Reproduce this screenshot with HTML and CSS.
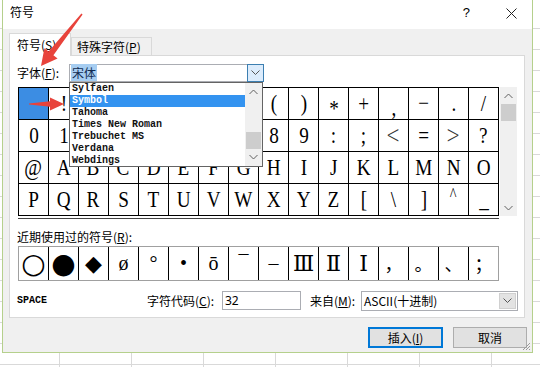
FILE: index.html
```html
<!DOCTYPE html>
<html lang="zh-CN">
<head>
    <meta charset="UTF-8">
    <title>符号</title>
    <link rel="stylesheet" href="styles.css">
</head>
<body>
<div class="desk">
    <div class="dialog">
        <div class="titlebar">
            <span class="title">符号</span>
            <span class="help">?</span>
            <svg class="close" width="11" height="11" viewBox="0 0 11 11"><path d="M0.5 0.5 L10.5 10.5 M10.5 0.5 L0.5 10.5" stroke="#222" stroke-width="1" fill="none"/></svg>
        </div>

        <div class="content">
            <div class="tabs">
                <div class="tab active">符号(<u>S</u>)</div>
                <div class="tab">特殊字符(<u>P</u>)</div>
            </div>

            <div class="panel">
                <div class="font-row">
                    <label class="font-label">字体(<u>F</u>):</label>
                    <div class="combo font-combo">
                        <span class="combo-text"><span class="hl">宋体</span></span>
                        <span class="combo-btn active-btn">
                            <svg width="9" height="6" viewBox="0 0 9 6"><path d="M0.5 0.5 L4.5 4.5 L8.5 0.5" stroke="#555" fill="none"/></svg>
                        </span>
                    </div>

                    <div class="font-list">
                        <ul class="font-items">
                            <li>Sylfaen</li>
                            <li class="picked">Symbol</li>
                            <li>Tahoma</li>
                            <li>Times New Roman</li>
                            <li>Trebuchet MS</li>
                            <li>Verdana</li>
                            <li>Webdings</li>
                        </ul>
                        <div class="scrollbar list-scroll">
                            <span class="sb-btn"><svg width="9" height="6" viewBox="0 0 9 6"><path d="M0.5 5 L4.5 1 L8.5 5" stroke="#606060" fill="none"/></svg></span>
                            <span class="sb-track"></span>
                            <span class="sb-thumb"></span>
                            <span class="sb-btn"><svg width="9" height="6" viewBox="0 0 9 6"><path d="M0.5 1 L4.5 5 L8.5 1" stroke="#606060" fill="none"/></svg></span>
                        </div>
                    </div>
                </div>

                <div class="symbols">
                    <div class="grid-wrap">
                        <div class="grid">
                            <div class="cell sel"><span></span></div>
                            <div class="cell"><span>!</span></div>
                            <div class="cell"><span>"</span></div>
                            <div class="cell"><span>#</span></div>
                            <div class="cell"><span>$</span></div>
                            <div class="cell"><span>%</span></div>
                            <div class="cell"><span>&amp;</span></div>
                            <div class="cell"><span>'</span></div>
                            <div class="cell"><span>(</span></div>
                            <div class="cell"><span>)</span></div>
                            <div class="cell"><span class="mid">*</span></div>
                            <div class="cell"><span>+</span></div>
                            <div class="cell"><span class="low">,</span></div>
                            <div class="cell"><span>−</span></div>
                            <div class="cell"><span>.</span></div>
                            <div class="cell"><span>/</span></div>

                            <div class="cell"><span>0</span></div>
                            <div class="cell"><span>1</span></div>
                            <div class="cell"><span>2</span></div>
                            <div class="cell"><span>3</span></div>
                            <div class="cell"><span>4</span></div>
                            <div class="cell"><span>5</span></div>
                            <div class="cell"><span>6</span></div>
                            <div class="cell"><span>7</span></div>
                            <div class="cell"><span>8</span></div>
                            <div class="cell"><span>9</span></div>
                            <div class="cell"><span>:</span></div>
                            <div class="cell"><span>;</span></div>
                            <div class="cell"><span class="thin">&lt;</span></div>
                            <div class="cell"><span>=</span></div>
                            <div class="cell"><span class="thin">&gt;</span></div>
                            <div class="cell"><span>?</span></div>

                            <div class="cell"><span>@</span></div>
                            <div class="cell"><span>A</span></div>
                            <div class="cell"><span>B</span></div>
                            <div class="cell"><span>C</span></div>
                            <div class="cell"><span>D</span></div>
                            <div class="cell"><span>E</span></div>
                            <div class="cell"><span>F</span></div>
                            <div class="cell"><span>G</span></div>
                            <div class="cell"><span>H</span></div>
                            <div class="cell"><span>I</span></div>
                            <div class="cell"><span>J</span></div>
                            <div class="cell"><span>K</span></div>
                            <div class="cell"><span>L</span></div>
                            <div class="cell"><span>M</span></div>
                            <div class="cell"><span>N</span></div>
                            <div class="cell"><span>O</span></div>

                            <div class="cell"><span>P</span></div>
                            <div class="cell"><span>Q</span></div>
                            <div class="cell"><span>R</span></div>
                            <div class="cell"><span>S</span></div>
                            <div class="cell"><span>T</span></div>
                            <div class="cell"><span>U</span></div>
                            <div class="cell"><span>V</span></div>
                            <div class="cell"><span>W</span></div>
                            <div class="cell"><span>X</span></div>
                            <div class="cell"><span>Y</span></div>
                            <div class="cell"><span>Z</span></div>
                            <div class="cell"><span>[</span></div>
                            <div class="cell"><span>\</span></div>
                            <div class="cell"><span>]</span></div>
                            <div class="cell"><span class="caret">^</span></div>
                            <div class="cell"><span>_</span></div>
                        </div>
                    </div>
                    <div class="scrollbar grid-scroll">
                        <span class="sb-btn"><svg width="9" height="6" viewBox="0 0 9 6"><path d="M0.5 5 L4.5 1 L8.5 5" stroke="#606060" fill="none"/></svg></span>
                        <span class="sb-thumb"></span>
                        <span class="sb-track"></span>
                        <span class="sb-btn"><svg width="9" height="6" viewBox="0 0 9 6"><path d="M0.5 1 L4.5 5 L8.5 1" stroke="#606060" fill="none"/></svg></span>
                    </div>
                </div>

                <div class="recent-label">近期使用过的符号(<u>R</u>):</div>
                <div class="recent">
                    <div class="rcell shape">○</div>
                    <div class="rcell shape">●</div>
                    <div class="rcell shape small">◆</div>
                    <div class="rcell">ø</div>
                    <div class="rcell">°</div>
                    <div class="rcell">•</div>
                    <div class="rcell">ō</div>
                    <div class="rcell">¯</div>
                    <div class="rcell">–</div>
                    <div class="rcell roman">Ⅲ</div>
                    <div class="rcell roman">Ⅱ</div>
                    <div class="rcell roman">Ⅰ</div>
                    <div class="rcell cjk">，</div>
                    <div class="rcell cjk">。</div>
                    <div class="rcell cjk">、</div>
                    <div class="rcell cjk">；</div>
                </div>

                <div class="code-row">
                    <span class="char-name">SPACE</span>
                    <label class="code-label">字符代码(<u>C</u>):</label>
                    <input class="code-input" type="text" value="32">
                    <label class="from-label">来自(<u>M</u>):</label>
                    <div class="combo from-combo">
                        <span class="combo-text">ASCII(十进制)</span>
                        <span class="combo-btn grey-btn">
                            <svg width="9" height="6" viewBox="0 0 9 6"><path d="M0.5 0.5 L4.5 4.5 L8.5 0.5" stroke="#555" fill="none"/></svg>
                        </span>
                    </div>
                </div>
            </div>

            <div class="actions">
                <button type="button" class="btn primary">插入(<u>I</u>)</button>
                <button type="button" class="btn">取消</button>
            </div>
        </div>

        <svg class="grip" width="9" height="9" viewBox="0 0 9 9">
            <path d="M8 1 L1 8 M8 4 L4 8 M8 7 L7 8" stroke="#9a9a9a" stroke-width="1" fill="none"/>
        </svg>
    </div>

    <!-- red callout arrows drawn over the dialog -->
    <svg class="arrows" width="540" height="367" viewBox="0 0 540 367">
        <polygon points="82.6,14.4 53.4,55.3 57.6,58.6 41,66 44.4,48.2 48.6,51.5 81.4,13.6" fill="#e8433b"/>
        <polygon points="29,103.6 50,101.2 50,97.5 64,104 50,110.5 50,106.8 29,104.4" fill="#e8433b"/>
    </svg>
</div>
</body>
</html>
```

FILE: styles.css
```css
* {
    box-sizing: border-box;
}

body {
    margin: 0;
    font-family: "Noto Sans CJK SC", "Noto Sans", sans-serif;
    font-size: 12px;
    color: #000;
}

u {
    text-decoration: underline;
}

.desk {
    position: relative;
    width: 540px;
    height: 367px;
    overflow: hidden;
    background-color: #fff;
    background-image:
        repeating-linear-gradient(90deg, transparent 0 71px, #d9d9d9 71px 72px),
        repeating-linear-gradient(180deg, transparent 0 20px, #d9d9d9 20px 21px);
    background-position: -12px 0, 0 8px;
}

.dialog {
    position: relative;
    margin-left: 2px;
    width: 531px;
    height: 353px;
    border: 1px solid #b5d08c;
    border-top: 0;
    background-color: #f0f0f0;
    display: flex;
    flex-direction: column;
}

/* title bar */

.titlebar {
    height: 29px;
    flex-shrink: 0;
    background-color: #fff;
    display: flex;
    align-items: flex-start;
    padding: 4px 15px 0 7px;
}

.title {
    line-height: 16px;
    font-size: 12px;
}

.help {
    margin-left: auto;
    margin-top: 1px;
    font-family: "Liberation Sans", sans-serif;
    font-size: 13px;
    line-height: 16px;
}

.close {
    margin-left: 36px;
    margin-top: 4px;
}

/* body */

.content {
    flex: 1;
    padding: 4px 7px 0 6px;
}

.tabs {
    display: flex;
    align-items: flex-end;
    height: 22px;
}

.tab {
    height: 18px;
    width: 81px;
    border: 1px solid #d9d9d9;
    border-bottom: 0;
    background-color: #f0f0f0;
    line-height: 16px;
    padding: 1px 0 0 5px;
    white-space: nowrap;
}

.tab.active {
    position: relative;
    z-index: 1;
    width: 62px;
    height: 23px;
    margin-bottom: -1px;
    background-color: #fff;
    padding: 3px 0 0 7px;
}

.panel {
    height: 263px;
    border: 1px solid #d9d9d9;
    background-color: #fff;
    padding-left: 7px;
}

/* font selector */

.font-row {
    position: relative;
    display: flex;
    align-items: center;
    margin-top: 8px;
    height: 18px;
}

.font-label {
    width: 52px;
    line-height: 18px;
    white-space: nowrap;
}

.combo {
    display: flex;
    height: 18px;
    border: 1px solid #abadb3;
    background-color: #fff;
}

.combo-text {
    flex: 1;
    line-height: 16px;
    padding-left: 1px;
    white-space: nowrap;
}

.font-combo {
    width: 195px;
}

.hl {
    background-color: #a6cdf1;
    color: #102a50;
    padding: 0 1px;
}

.combo-btn {
    width: 17px;
    display: flex;
    align-items: center;
    justify-content: center;
}

.active-btn {
    margin: -1px -1px -1px 0;
    border: 1px solid #3c7fb1;
    background-color: #dcecfc;
}

.grey-btn {
    margin: 1px 1px 1px 0;
    background-color: #e3e3e3;
    border: 1px solid #d0d0d0;
}

.font-list {
    position: absolute;
    top: 18px;
    left: 52px;
    z-index: 3;
    width: 194px;
    height: 85px;
    border: 1px solid #646464;
    background-color: #fff;
    display: flex;
}

.font-items {
    list-style: none;
    margin: 0;
    padding: 0;
    flex: 1;
}

.font-items li {
    height: 12px;
    line-height: 12px;
    padding-left: 2px;
    font-family: "Liberation Mono", monospace;
    font-size: 10px;
    font-weight: bold;
    color: #111;
}

.font-items li.picked {
    background-color: #3393f0;
    color: #fff;
}

/* scrollbars */

.scrollbar {
    width: 17px;
    display: flex;
    flex-direction: column;
    background-color: #f0f0f0;
}

.sb-btn {
    height: 17px;
    display: flex;
    align-items: center;
    justify-content: center;
}

.sb-track {
    flex: 1;
}

.sb-thumb {
    height: 17px;
    margin: 0 1px;
    background-color: #cdcdcd;
}

.list-scroll .sb-track {
    flex: 0 0 32px;
}

.list-scroll .sb-btn:last-child {
    height: 16px;
}

/* symbol grid */

.symbols {
    display: flex;
    margin: 5px 0 0 1px;
}

.grid-wrap {
    padding-bottom: 2px;
    border-bottom: 1px solid #444;
}

.grid {
    display: grid;
    grid-template-columns: repeat(16, 29px);
    grid-auto-rows: 31px;
    gap: 1px;
    border: 1px solid #000;
    background-color: #000;
}

.cell {
    background-color: #fff;
    display: flex;
    align-items: center;
    justify-content: center;
    font-family: "Liberation Serif", serif;
    font-size: 24px;
    line-height: 31px;
}

.cell span {
    display: inline-block;
    transform: scaleX(0.8);
}

.cell span.mid {
    transform: scaleX(0.8) translateY(5px);
}

.cell span.low {
    transform: scaleX(0.8) translateY(4px);
}

.cell span.caret {
    transform: scaleX(0.8) translateY(-4px);
    font-size: 18px;
}

.cell span.thin {
    font-family: "DejaVu Sans", sans-serif;
    font-weight: 200;
    transform: scaleX(0.7);
    color: #333;
}

.cell.sel {
    background-color: #3c8de3;
}

.grid-scroll {
    height: 129px;
    margin-left: 1px;
}

/* recently used */

.recent-label {
    margin-top: 10px;
    line-height: 16px;
    white-space: nowrap;
}

.recent {
    display: grid;
    grid-template-columns: repeat(16, 29px);
    grid-auto-rows: 33px;
    gap: 1px;
    width: 481px;
    margin: 1px 0 0 1px;
    border: 1px solid #a0a0a0;
    background-color: #000;
}

.rcell {
    background-color: #fff;
    display: flex;
    align-items: center;
    justify-content: center;
    font-family: "Liberation Serif", "DejaVu Serif", serif;
    font-size: 20px;
    line-height: 33px;
}

.rcell.shape {
    font-family: "DejaVu Sans", sans-serif;
    font-size: 28px;
}

.rcell.shape.small {
    font-size: 22px;
}

.rcell.roman {
    font-family: "DejaVu Serif", "Noto Sans CJK SC", serif;
    font-size: 22px;
}

.rcell.cjk {
    font-family: "Noto Sans CJK SC", sans-serif;
    font-size: 18px;
}

/* code row */

.code-row {
    display: flex;
    align-items: center;
    margin-top: 10px;
    height: 19px;
}

.char-name {
    width: 130px;
    font-family: "Liberation Mono", monospace;
    font-size: 10px;
    font-weight: bold;
}

.code-label {
    width: 75px;
    white-space: nowrap;
}

.code-input {
    width: 79px;
    height: 19px;
    border: 1px solid #abadb3;
    padding: 0 2px;
    font-family: "Noto Sans", sans-serif;
    font-size: 12px;
    outline: none;
}

.from-label {
    width: 51px;
    margin-left: 9px;
    white-space: nowrap;
}

.from-combo {
    width: 157px;
    height: 20px;
    margin-top: 1px;
}

.from-combo .combo-text {
    line-height: 18px;
    padding-left: 2px;
}

/* buttons */

.actions {
    display: flex;
    justify-content: flex-end;
    gap: 10px;
    margin: 9px -2px 0 0;
}

.btn {
    width: 74px;
    height: 21px;
    padding: 0;
    border: 1px solid #adadad;
    background-color: #e1e1e1;
    font-family: "Noto Sans CJK SC", sans-serif;
    font-size: 12px;
    line-height: 19px;
    color: #000;
}

.btn.primary {
    width: 75px;
    border-color: #0078d7;
    box-shadow: inset 0 0 0 1px #0078d7;
}

.grip {
    position: absolute;
    right: 1px;
    bottom: 1px;
}

.arrows {
    position: absolute;
    top: 0;
    left: 0;
    z-index: 5;
    pointer-events: none;
}
```
